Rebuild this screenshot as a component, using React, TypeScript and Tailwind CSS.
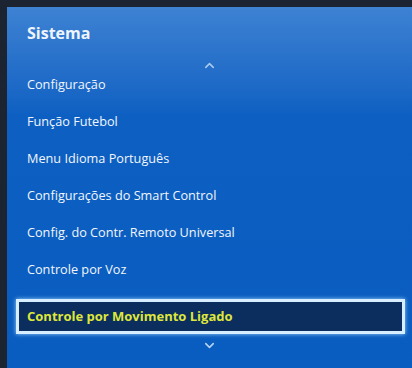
import { ChevronUp, ChevronDown } from "lucide-react";

const items = [
  "Configuração",
  "Função Futebol",
  "Menu Idioma Português",
  "Configurações do Smart Control",
  "Config. do Contr. Remoto Universal",
  "Controle por Voz",
];

export default function App() {
  return (
    <div className="h-[368px] w-[412px] overflow-hidden bg-[#1b2430] pl-[7px] pt-[7px] font-['Open_Sans',sans-serif]">
      <div className="flex h-full flex-col bg-gradient-to-b from-[#3d82d3] via-[#0d60c2] via-30% to-[#0a5dc0] text-white">
        <h1 className="pl-[20px] pt-[15px] text-[16px] font-bold leading-[22px] text-[#eef4fb]">Sistema</h1>
        <div className="mt-[14px] flex h-[14px] items-center justify-center text-[#a9c9ee]">
          <ChevronUp size={15} strokeWidth={2.5} />
        </div>
        <ul className="-mt-[6px] flex flex-col">
          {items.map((label) => (
            <li key={label} className="flex h-[37px] items-center pl-[20px] text-[12.7px] text-[#f2f6fb]">
              {label}
            </li>
          ))}
        </ul>
        <div className="ml-[9px] mr-[7px] mt-[11px] flex h-[35px] items-center border-[3px] border-[#d6eeff] bg-[#0b2e5f] pl-[8px] text-[13px] font-bold text-[#dfe63a] shadow-[0_0_4px_#9fd6ff]">
          Controle por Movimento Ligado
        </div>
        <div className="mt-[4px] flex h-[14px] items-center justify-center text-[#b8d4f2]">
          <ChevronDown size={15} strokeWidth={2.5} />
        </div>
      </div>
    </div>
  );
}
